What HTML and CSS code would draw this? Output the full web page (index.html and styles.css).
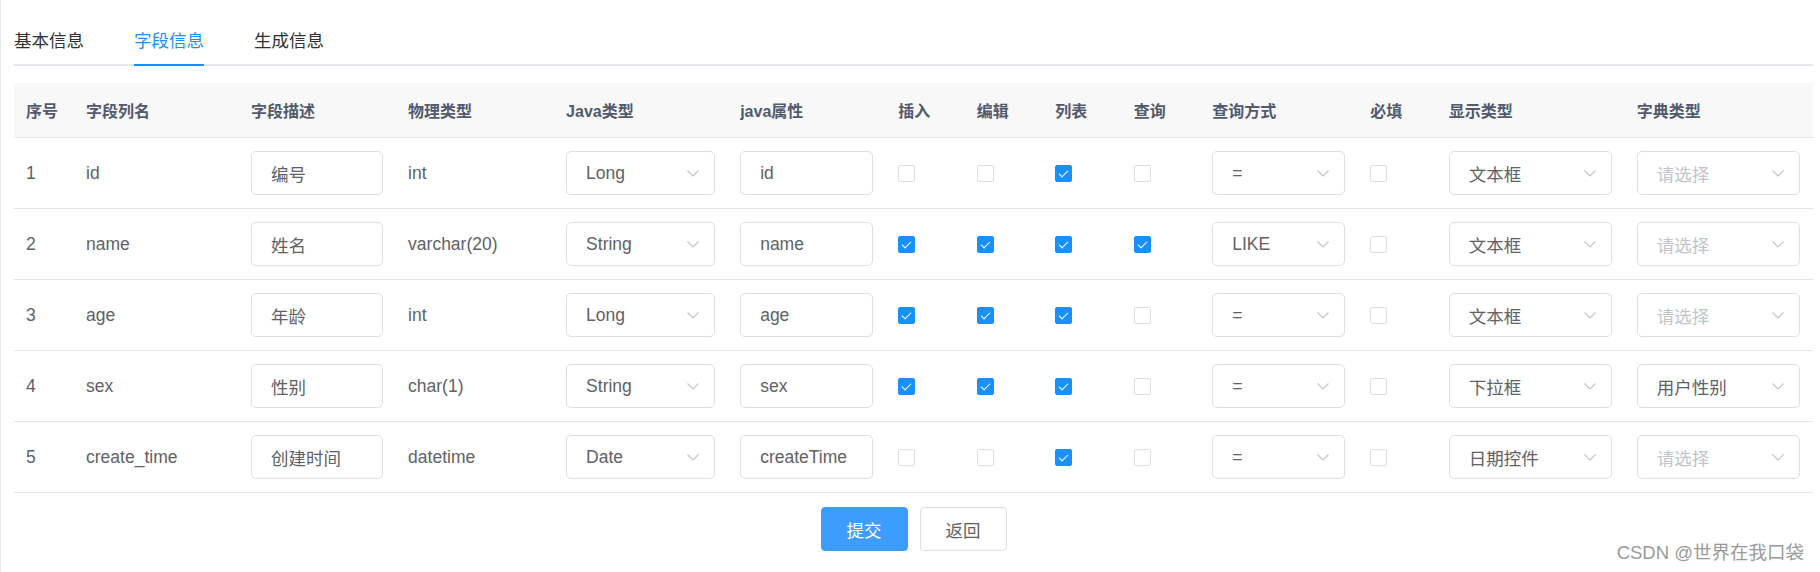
FILE: index.html
```html
<!DOCTYPE html>
<html lang="zh-CN">
<head>
<meta charset="utf-8">
<title>字段信息</title>
<link rel="stylesheet" href="styles.css">
</head>
<body>
<div class="page">
  <div class="tabs">
    <div class="tab">基本信息</div>
    <div class="tab active">字段信息</div>
    <div class="tab">生成信息</div>
  </div>

  <table class="grid">
    <colgroup>
      <col class="c-no"><col class="c-name"><col class="c-desc"><col class="c-phys"><col class="c-jtype"><col class="c-jprop">
      <col class="c-chk"><col class="c-chk"><col class="c-chk"><col class="c-chk"><col class="c-query"><col class="c-chk">
      <col class="c-wide"><col class="c-wide">
    </colgroup>
    <thead>
      <tr>
        <th>序号</th><th>字段列名</th><th>字段描述</th><th>物理类型</th><th>Java类型</th><th>java属性</th>
        <th>插入</th><th>编辑</th><th>列表</th><th>查询</th><th>查询方式</th><th>必填</th><th>显示类型</th><th>字典类型</th>
      </tr>
    </thead>
    <tbody>
      <tr>
        <td>1</td><td>id</td>
        <td><div class="field">编号</div></td>
        <td>int</td>
        <td><div class="field select"><span>Long</span><svg class="chev" viewBox="0 0 12 7"><polyline points="0.5,0.5 6,6 11.5,0.5"/></svg></div></td>
        <td><div class="field">id</div></td>
        <td><span class="cb"></span></td><td><span class="cb"></span></td><td><span class="cb on"></span></td><td><span class="cb"></span></td>
        <td><div class="field select"><span>=</span><svg class="chev" viewBox="0 0 12 7"><polyline points="0.5,0.5 6,6 11.5,0.5"/></svg></div></td>
        <td><span class="cb"></span></td>
        <td><div class="field select"><span>文本框</span><svg class="chev" viewBox="0 0 12 7"><polyline points="0.5,0.5 6,6 11.5,0.5"/></svg></div></td>
        <td><div class="field select"><span class="ph">请选择</span><svg class="chev" viewBox="0 0 12 7"><polyline points="0.5,0.5 6,6 11.5,0.5"/></svg></div></td>
      </tr>
      <tr>
        <td>2</td><td>name</td>
        <td><div class="field">姓名</div></td>
        <td>varchar(20)</td>
        <td><div class="field select"><span>String</span><svg class="chev" viewBox="0 0 12 7"><polyline points="0.5,0.5 6,6 11.5,0.5"/></svg></div></td>
        <td><div class="field">name</div></td>
        <td><span class="cb on"></span></td><td><span class="cb on"></span></td><td><span class="cb on"></span></td><td><span class="cb on"></span></td>
        <td><div class="field select"><span>LIKE</span><svg class="chev" viewBox="0 0 12 7"><polyline points="0.5,0.5 6,6 11.5,0.5"/></svg></div></td>
        <td><span class="cb"></span></td>
        <td><div class="field select"><span>文本框</span><svg class="chev" viewBox="0 0 12 7"><polyline points="0.5,0.5 6,6 11.5,0.5"/></svg></div></td>
        <td><div class="field select"><span class="ph">请选择</span><svg class="chev" viewBox="0 0 12 7"><polyline points="0.5,0.5 6,6 11.5,0.5"/></svg></div></td>
      </tr>
      <tr>
        <td>3</td><td>age</td>
        <td><div class="field">年龄</div></td>
        <td>int</td>
        <td><div class="field select"><span>Long</span><svg class="chev" viewBox="0 0 12 7"><polyline points="0.5,0.5 6,6 11.5,0.5"/></svg></div></td>
        <td><div class="field">age</div></td>
        <td><span class="cb on"></span></td><td><span class="cb on"></span></td><td><span class="cb on"></span></td><td><span class="cb"></span></td>
        <td><div class="field select"><span>=</span><svg class="chev" viewBox="0 0 12 7"><polyline points="0.5,0.5 6,6 11.5,0.5"/></svg></div></td>
        <td><span class="cb"></span></td>
        <td><div class="field select"><span>文本框</span><svg class="chev" viewBox="0 0 12 7"><polyline points="0.5,0.5 6,6 11.5,0.5"/></svg></div></td>
        <td><div class="field select"><span class="ph">请选择</span><svg class="chev" viewBox="0 0 12 7"><polyline points="0.5,0.5 6,6 11.5,0.5"/></svg></div></td>
      </tr>
      <tr>
        <td>4</td><td>sex</td>
        <td><div class="field">性别</div></td>
        <td>char(1)</td>
        <td><div class="field select"><span>String</span><svg class="chev" viewBox="0 0 12 7"><polyline points="0.5,0.5 6,6 11.5,0.5"/></svg></div></td>
        <td><div class="field">sex</div></td>
        <td><span class="cb on"></span></td><td><span class="cb on"></span></td><td><span class="cb on"></span></td><td><span class="cb"></span></td>
        <td><div class="field select"><span>=</span><svg class="chev" viewBox="0 0 12 7"><polyline points="0.5,0.5 6,6 11.5,0.5"/></svg></div></td>
        <td><span class="cb"></span></td>
        <td><div class="field select"><span>下拉框</span><svg class="chev" viewBox="0 0 12 7"><polyline points="0.5,0.5 6,6 11.5,0.5"/></svg></div></td>
        <td><div class="field select"><span>用户性别</span><svg class="chev" viewBox="0 0 12 7"><polyline points="0.5,0.5 6,6 11.5,0.5"/></svg></div></td>
      </tr>
      <tr>
        <td>5</td><td>create_time</td>
        <td><div class="field">创建时间</div></td>
        <td>datetime</td>
        <td><div class="field select"><span>Date</span><svg class="chev" viewBox="0 0 12 7"><polyline points="0.5,0.5 6,6 11.5,0.5"/></svg></div></td>
        <td><div class="field">createTime</div></td>
        <td><span class="cb"></span></td><td><span class="cb"></span></td><td><span class="cb on"></span></td><td><span class="cb"></span></td>
        <td><div class="field select"><span>=</span><svg class="chev" viewBox="0 0 12 7"><polyline points="0.5,0.5 6,6 11.5,0.5"/></svg></div></td>
        <td><span class="cb"></span></td>
        <td><div class="field select"><span>日期控件</span><svg class="chev" viewBox="0 0 12 7"><polyline points="0.5,0.5 6,6 11.5,0.5"/></svg></div></td>
        <td><div class="field select"><span class="ph">请选择</span><svg class="chev" viewBox="0 0 12 7"><polyline points="0.5,0.5 6,6 11.5,0.5"/></svg></div></td>
      </tr>
    </tbody>
  </table>

  <div class="actions">
    <button class="btn btn-primary">提交</button>
    <button class="btn">返回</button>
  </div>

  <div class="watermark">CSDN @世界在我口袋</div>
</div>
</body>
</html>
```

FILE: styles.css
```css
html, body {
  margin: 0;
  padding: 0;
  background: #ffffff;
}

body {
  font-family: "Liberation Sans", "Noto Sans CJK SC", sans-serif;
  font-size: 17.5px;
  color: #606266;
}

.page {
  position: relative;
  box-sizing: border-box;
  width: 1820px;
  height: 572px;
  padding: 18px 0 0 13px;
  border-left: 1px solid #e9e9e9;
  overflow: hidden;
}

/* ---------- tabs ---------- */
.tabs {
  display: flex;
  align-items: flex-start;
  gap: 50px;
  width: 1799px;
  border-bottom: 2px solid #e4e7ed;
}

.tab {
  height: 46px;
  line-height: 46px;
  font-size: 17.5px;
  color: #303133;
}

.tab.active {
  color: #1890ff;
  border-bottom: 2px solid #1890ff;
  margin-bottom: -2px;
}

/* ---------- table ---------- */
.grid {
  margin-top: 17px;
  width: 1799px;
  table-layout: fixed;
  border-collapse: collapse;
  border-spacing: 0;
}

.c-no { width: 60px; }
.c-name { width: 165px; }
.c-desc { width: 157px; }
.c-phys { width: 158px; }
.c-jtype { width: 174px; }
.c-jprop { width: 158px; }
.c-chk { width: 78.5px; }
.c-query { width: 158px; }
.c-wide { width: 188px; }

.grid th {
  height: 54px;
  padding: 0 13px 0 12px;
  background: #f8f8f9;
  color: #515a6e;
  font-size: 16px;
  font-weight: bold;
  text-align: left;
  border-bottom: 1px solid #dfe6ec;
  white-space: nowrap;
}

.grid td {
  height: 70px;
  padding: 0 13px 0 12px;
  font-size: 17.5px;
  color: #606266;
  text-align: left;
  vertical-align: middle;
  border-bottom: 1px solid #dfe6ec;
  white-space: nowrap;
}

/* ---------- inputs / selects ---------- */
.field {
  box-sizing: border-box;
  display: flex;
  align-items: center;
  height: 44px;
  padding: 0 15px 0 19px;
  border: 1px solid #dcdfe6;
  border-radius: 5px;
  background: #ffffff;
  color: #606266;
  font-size: 17.5px;
  white-space: nowrap;
  overflow: hidden;
}

.field.select {
  justify-content: space-between;
}

.ph {
  color: #c0c4cc;
}

.chev {
  width: 12px;
  height: 7px;
  flex: none;
  fill: none;
  stroke: #c0c4cc;
  stroke-width: 1.1;
}

/* ---------- checkbox ---------- */
.cb {
  position: relative;
  display: inline-block;
  box-sizing: border-box;
  width: 17px;
  height: 17px;
  border: 1px solid #dcdfe6;
  border-radius: 2px;
  background: #ffffff;
  vertical-align: middle;
}

.cb.on {
  background: #1890ff;
  border-color: #1890ff;
}

.cb.on::after {
  content: "";
  position: absolute;
  left: 5px;
  top: 2px;
  width: 4px;
  height: 8px;
  border: 1.2px solid #ffffff;
  border-left: 0;
  border-top: 0;
  transform: rotate(45deg);
}

/* ---------- buttons ---------- */
.actions {
  display: flex;
  justify-content: center;
  gap: 12px;
  width: 1799px;
  margin-top: 14px;
}

.btn {
  box-sizing: border-box;
  width: 87px;
  height: 44px;
  padding: 0;
  border: 1px solid #dcdfe6;
  border-radius: 4px;
  background: #ffffff;
  color: #606266;
  font-family: "Liberation Sans", "Noto Sans CJK SC", sans-serif;
  font-size: 17.5px;
  cursor: pointer;
}

.btn-primary {
  background: #3d9dff;
  border-color: #3d9dff;
  color: #ffffff;
}

/* ---------- watermark ---------- */
.watermark {
  position: absolute;
  top: 541px;
  right: 16px;
  line-height: 24px;
  font-size: 18.5px;
  color: #9a9a9a;
  white-space: nowrap;
}
```
